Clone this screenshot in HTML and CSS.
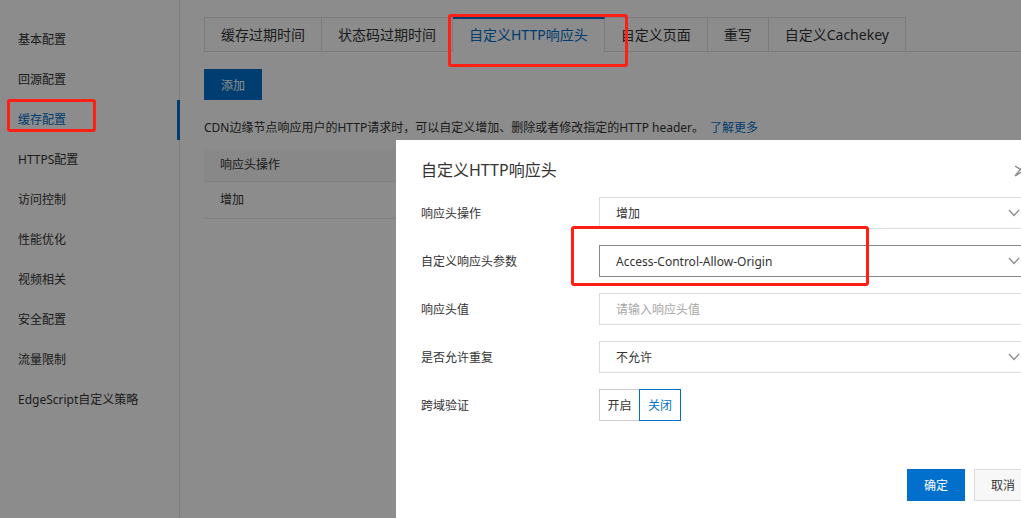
FILE: index.html
```html
<!DOCTYPE html>
<html lang="zh-CN">
<head>
<meta charset="utf-8">
<title>缓存配置</title>
<link rel="stylesheet" href="styles.css">
</head>
<body>
<div class="page">
  <nav class="sidebar">
    <div class="nav-item">基本配置</div>
    <div class="nav-item">回源配置</div>
    <div class="nav-item active">缓存配置</div>
    <div class="nav-item">HTTPS配置</div>
    <div class="nav-item">访问控制</div>
    <div class="nav-item">性能优化</div>
    <div class="nav-item">视频相关</div>
    <div class="nav-item">安全配置</div>
    <div class="nav-item">流量限制</div>
    <div class="nav-item">EdgeScript自定义策略</div>
  </nav>
  <main class="main">
    <div class="tabs">
      <div class="tab">缓存过期时间</div>
      <div class="tab">状态码过期时间</div>
      <div class="tab active">自定义HTTP响应头</div>
      <div class="tab">自定义页面</div>
      <div class="tab">重写</div>
      <div class="tab">自定义Cachekey</div>
    </div>
    <button class="btn-add">添加</button>
    <p class="desc">CDN边缘节点响应用户的HTTP请求时，可以自定义增加、删除或者修改指定的HTTP header。<a class="more">了解更多</a></p>
    <div class="table">
      <div class="thead"><span>响应头操作</span></div>
      <div class="trow"><span>增加</span></div>
    </div>
  </main>
</div>

<div class="mask"></div>

<div class="dialog">
  <div class="dialog-title">自定义HTTP响应头</div>
  <svg class="close" viewBox="0 0 10 12" width="10" height="12"><path d="M1 1 L9 6 L1 11 M9 1 L1 11" fill="none" stroke="#8a8a8a" stroke-width="1.3"/></svg>
  <div class="form">
    <div class="row">
      <label>响应头操作</label>
      <div class="select"><span>增加</span><svg class="chev" viewBox="0 0 12 8" width="12" height="8"><path d="M1 1 L6 6.5 L11 1" fill="none" stroke="#888" stroke-width="1.2"/></svg></div>
    </div>
    <div class="row">
      <label>自定义响应头参数</label>
      <div class="select focus"><span>Access-Control-Allow-Origin</span><svg class="chev" viewBox="0 0 12 8" width="12" height="8"><path d="M1 1 L6 6.5 L11 1" fill="none" stroke="#888" stroke-width="1.2"/></svg></div>
    </div>
    <div class="row">
      <label>响应头值</label>
      <div class="select input"><span class="ph">请输入响应头值</span></div>
    </div>
    <div class="row">
      <label>是否允许重复</label>
      <div class="select"><span>不允许</span><svg class="chev" viewBox="0 0 12 8" width="12" height="8"><path d="M1 1 L6 6.5 L11 1" fill="none" stroke="#888" stroke-width="1.2"/></svg></div>
    </div>
    <div class="row">
      <label>跨域验证</label>
      <div class="toggle"><span class="opt">开启</span><span class="opt on">关闭</span></div>
    </div>
  </div>
  <div class="footer">
    <button class="btn-ok">确定</button>
    <button class="btn-cancel">取消</button>
  </div>
</div>

<div class="mark mark-nav"></div>
<div class="mark mark-tab"></div>
<div class="mark mark-field"></div>
</body>
</html>
```

FILE: styles.css
```css
html, body {
  margin: 0;
  padding: 0;
  background: #fff;
  overflow: hidden;
  width: 1021px;
  height: 518px;
}
body {
  font-family: "Noto Sans", "Noto Sans CJK SC", sans-serif;
  font-size: 12px;
  color: #333;
  position: relative;
}
.page {
  display: flex;
  height: 518px;
}
.sidebar {
  width: 180px;
  flex: none;
  border-right: 1px solid #e6e6e6;
  padding-top: 20px;
  box-sizing: border-box;
}
.nav-item {
  height: 40px;
  line-height: 40px;
  padding-left: 18px;
  font-size: 12px;
  color: #333;
  margin-right: -1px;
}
.nav-item.active {
  color: #0070cc;
  border-right: 3px solid #0070cc;
}
.main {
  flex: 1;
  padding: 17px 0 0 24px;
}
.tabs {
  display: flex;
  border-bottom: 1px solid #e0e0e0;
  height: 35px;
  box-sizing: border-box;
}
.tab {
  height: 35px;
  line-height: 34px;
  padding: 0 16px;
  font-size: 14px;
  color: #333;
  border: 1px solid #e0e0e0;
  border-left: none;
  border-bottom: none;
  box-sizing: border-box;
  white-space: nowrap;
}
.tab:first-child {
  border-left: 1px solid #e0e0e0;
}
.tab.active {
  color: #0070cc;
  border-top: 2px solid #0070cc;
  background: #fff;
  height: 35px;
  line-height: 32px;
  padding: 0 16px;
}
.btn-add {
  display: block;
  margin-top: 17px;
  width: 58px;
  height: 31px;
  border: none;
  background: #0070cc;
  color: #fff;
  font-family: inherit;
  font-size: 12px;
  padding: 0;
}
.desc {
  margin: 19px 0 0;
  line-height: 18px;
  font-size: 12px;
  color: #333;
}
.more {
  color: #0070cc;
  margin-left: 6px;
}
.table {
  margin-top: 12px;
}
.thead {
  height: 32px;
  line-height: 32px;
  background: #f7f7f7;
  padding-left: 16px;
  border-bottom: 1px solid #ececec;
}
.trow {
  height: 36px;
  line-height: 36px;
  padding-left: 16px;
  border-bottom: 1px solid #ececec;
}
.mask {
  position: absolute;
  inset: 0;
  background: rgba(0, 0, 0, 0.45);
}
.dialog {
  position: absolute;
  left: 396px;
  top: 140px;
  width: 659px;
  height: 378px;
  background: #fff;
  box-sizing: border-box;
  padding: 19px 25px 0;
}
.dialog-title {
  font-size: 16px;
  line-height: 22px;
  color: #333;
}
.close {
  position: absolute;
  top: 25px;
  right: 31px;
}
.form {
  margin-top: 16px;
  display: flex;
  flex-direction: column;
  gap: 16px;
}
.row {
  display: flex;
  align-items: center;
  height: 32px;
}
.row label {
  width: 178px;
  flex: none;
  color: #333;
}
.select {
  flex: 1;
  height: 32px;
  box-sizing: border-box;
  border: 1px solid #dcdcdc;
  display: flex;
  align-items: center;
  justify-content: space-between;
  padding: 0 9px 0 16px;
  color: #333;
}
.select.focus {
  border-color: #888;
}
.ph {
  color: #a6a6a6;
}
.chev {
  display: block;
}
.toggle {
  display: flex;
  height: 32px;
}
.opt {
  width: 41px;
  height: 32px;
  box-sizing: border-box;
  border: 1px solid #cfcfcf;
  display: flex;
  align-items: center;
  justify-content: center;
  color: #333;
}
.opt.on {
  border-color: #0070cc;
  color: #0070cc;
  width: 42px;
  margin-left: -1px;
}
.footer {
  display: flex;
  justify-content: flex-end;
  gap: 9px;
  margin-top: 48px;
  margin-right: -2px;
}
.btn-ok, .btn-cancel {
  width: 58px;
  height: 32px;
  font-family: inherit;
  font-size: 12px;
  padding: 0;
  box-sizing: border-box;
}
.btn-ok {
  background: #0070cc;
  color: #fff;
  border: none;
}
.btn-cancel {
  background: #f7f7f7;
  color: #333;
  border: 1px solid #dcdcdc;
}
.mark {
  position: absolute;
  border: 3px solid #ff1f14;
  border-radius: 3px;
  box-sizing: border-box;
}
.mark-nav {
  left: 7px;
  top: 99px;
  width: 89px;
  height: 33px;
}
.mark-tab {
  left: 448px;
  top: 14px;
  width: 180px;
  height: 53px;
}
.mark-field {
  left: 571px;
  top: 226px;
  width: 298px;
  height: 60px;
}
```
